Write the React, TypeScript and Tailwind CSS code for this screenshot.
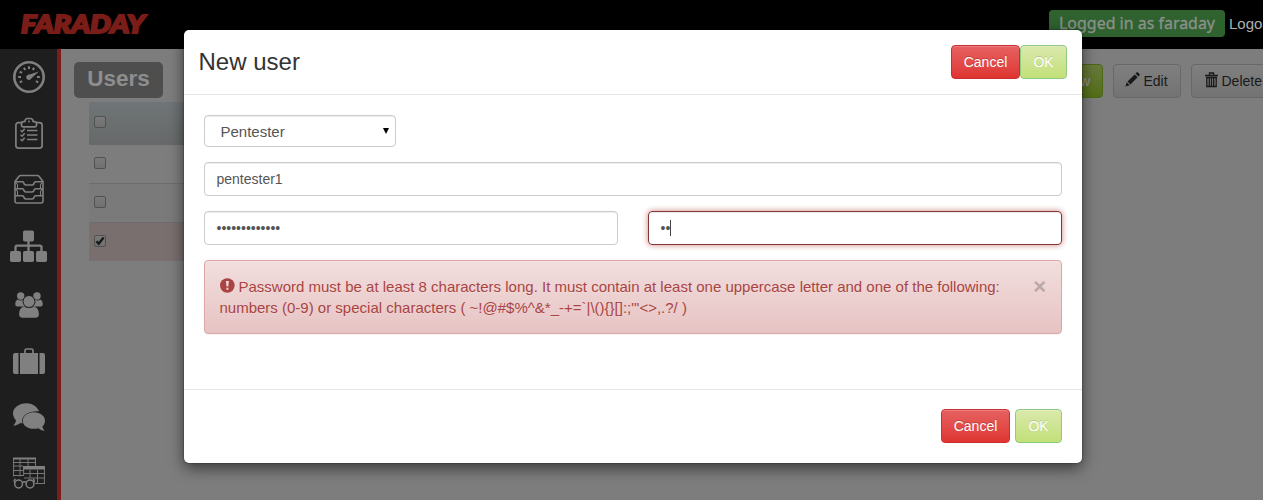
import React from "react";

const ARIAL = "font-['Liberation_Sans',Arial,sans-serif]";

function Gauge() {
  return (
    <svg width="57" height="56" viewBox="0 0 57 56" fill="none" stroke="#808080">
      <circle cx="29" cy="28" r="14.7" strokeWidth="2.6" />
      <path
        strokeWidth="2"
        d="M18.2 28h2.8M37 28h2.8M19.7 22.6l2.3 1.3M24 18.7l1.2 2.2M29 17.2v2.8M34 18.7l-1.2 2.2M19.8 33.3l2.3-1.2M38.2 33.3l-2.3-1.2"
      />
      <path d="M38.8 22.6l-8.2 7.5a2.4 2.4 0 1 1-2.7-4z" fill="#808080" stroke="none" />
      <circle cx="28.8" cy="28.2" r="2.5" fill="#808080" stroke="none" />
    </svg>
  );
}

function Clipboard() {
  return (
    <svg width="57" height="56" viewBox="0 0 57 56" fill="none" stroke="#808080" strokeLinejoin="round">
      <path strokeWidth="1.700" d="M22 17.700h-3.500a2.600 2.600 0 0 0-2.600 2.600v20.300a2.600 2.600 0 0 0 2.600 2.600h21a2.600 2.600 0 0 0 2.600-2.600v-20.300a2.600 2.600 0 0 0-2.600-2.600H36" />
      <path strokeWidth="1.700" d="M21.500 20.300v-1.800q0-1.800 2-1.800h1.300q.4-2.900 2.200-3.200h4q1.800.3 2.200 3.200h1.300q2 0 2 1.800v1.800q0 1.500-1.500 1.500H23q-1.500 0-1.500-1.500z" />
      <circle cx="29" cy="16.500" r="1" fill="#808080" stroke="none" />
      <path strokeWidth="1.500" d="M20.500 25.300l1.600 1.400 2.600-3M20.500 29.800l1.600 1.400 2.600-3M20.500 34.300l1.600 1.400 2.600-3" />
      <path strokeWidth="1.600" d="M27 25.500h10.500M27 30h10.500M27 34.500h10.500" />
    </svg>
  );
}

function Inbox() {
  return (
    <svg width="57" height="56" viewBox="0 0 57 56" fill="none" stroke="#808080" strokeWidth="1.600" strokeLinejoin="round">
      <path d="M15 20.500l4-5.300q.6-.7 1.600-.7h16.800q1 0 1.600.7l4 5.300v19.500a2 2 0 0 1-2 2H17a2 2 0 0 1-2-2z" />
      <path d="M15 20.700h7.500q1 0 1.300 1.300.4 2 2.200 2h6q1.800 0 2.200-2 .3-1.300 1.300-1.300H43M15 27.700h7.500q1 0 1.300 1.300.4 2 2.200 2h6q1.800 0 2.200-2 .3-1.300 1.300-1.300H43M15 34.700h7.500q1 0 1.300 1.300.4 2 2.200 2h6q1.800 0 2.200-2 .3-1.300 1.300-1.300H43" />
      <path strokeWidth="1.100" d="M15.500 21l2 2.500v4M42.500 21l-2 2.500v4M15.500 28l2 2.500v4M42.500 28l-2 2.500v4" />
    </svg>
  );
}

function Sitemap() {
  return (
    <svg width="57" height="58" viewBox="0 0 57 58" fill="#808080">
      <rect x="23" y="13.500" width="11" height="11" rx="1.800" />
      <rect x="10" y="34" width="11" height="11" rx="1.800" />
      <rect x="23" y="34" width="11" height="11" rx="1.800" />
      <rect x="36" y="34" width="11" height="11" rx="1.800" />
      <path fill="none" stroke="#808080" strokeWidth="2.300" d="M28.500 24v11M15.500 35v-4.700q0-1.600 1.600-1.600h22.800q1.600 0 1.600 1.600V35" />
    </svg>
  );
}

function Group() {
  return (
    <svg width="57" height="58" viewBox="0 0 57 58" fill="#808080">
      <circle cx="20.700" cy="21" r="3.700" />
      <circle cx="37" cy="21" r="3.700" />
      <path d="M17.500 24.500q3.500 2 5.300 0 .2 4.500 3 7H17q-1.800-.2-1.800-2.500 0-3.500 2.300-4.500zM40.500 24.500q-3.500 2-5.300 0-.2 4.500-3 7H41q1.800-.2 1.800-2.500 0-3.500-2.300-4.500z" />
      <circle cx="29" cy="26.500" r="6" stroke="#1e1e1e" />
      <path d="M24 31.500q5 3 10 0 4.900 1.300 4.900 7.500 0 3.800-3.500 3.800H22.600q-3.500 0-3.500-3.800 0-6.200 4.900-7.500z" />
    </svg>
  );
}

function Suitcase() {
  return (
    <svg width="57" height="56" viewBox="0 0 57 56" fill="#808080">
      <path d="M18.500 20v21H15q-2 0-2-2V22q0-2 2-2zM20 20h18v21H20zM39.500 20H43q2 0 2 2v17q0 2-2 2h-3.500z" />
      <path fill="none" stroke="#808080" strokeWidth="1.700" d="M25 20v-2.500q0-1.500 1.500-1.500h5q1.500 0 1.500 1.500V20" />
    </svg>
  );
}

function Comments() {
  return (
    <svg width="57" height="56" viewBox="0 0 57 56" fill="#808080">
      <path d="M26.500 14.300c-7.500 0-13.500 4.400-13.500 10 0 3 1.500 5.500 3 7.200-.4 2-1.300 3.700-2.800 5.300 3-.4 5.500-1.400 7-2.900l2.300.5c-2.300-7.200 5.500-12.700 16.500-12.100-2-4.800-6.700-8-12.500-8z" />
      <path d="M34 23.300c6.300 0 11 3.700 11 8.400 0 2.600-1.300 4.700-2.600 5.800.3 1.700 1 3 2.400 4.300-2.800-.3-4.700-1.200-6.300-2.600-8.300 2.300-15.700-1.600-15.700-7.500 0-4.700 4.900-8.400 11.200-8.400z" />
    </svg>
  );
}

function Tables() {
  return (
    <svg width="57" height="56" viewBox="0 0 57 56" fill="none" stroke="#808080" strokeWidth="0.900">
      <path fill="#808080" stroke="none" d="M13 12.500h23V14.500H13zM23 21h22v3.500H23z" />
      <path d="M13.600 14v17.500M20 14v17.500M28 14v7M35.500 14v7M13 17.500h23M13 21h10M13 25.500h10M13 30.500h10M23.600 23v8M30 25v8M37.500 25v13.500M44.400 23v15.500M24 28.500h21M24 33h21M35 38.500h10" />
      <g strokeWidth="1.500">
        <circle cx="18.600" cy="39" r="3.900" />
        <circle cx="30" cy="39" r="3.900" />
        <path d="M22.300 37.500q2-1.500 4 0M14.800 37.500q-1.300-2.500.7-3.700M33.700 37.500q1.300-2.500-.7-3.700" />
      </g>
    </svg>
  );
}

function Cancel() {
  return (
    <button className="h-[34px] w-[69px] rounded-[4px] border border-[#c9302f] bg-linear-to-b from-[#e66060] to-[#df3431] text-[14px] leading-5 text-white shadow-[inset_0_1px_0_rgba(255,255,255,0.2)] text-shadow-[0_-1px_0_rgba(0,0,0,0.2)]">
      Cancel
    </button>
  );
}

function Ok() {
  return (
    <button className="h-[34px] w-[47px] rounded-[4px] border border-[#8fca82] bg-linear-to-b from-[#dae9ac] to-[#c2e077] text-[14px] leading-5 text-white shadow-[inset_0_1px_0_rgba(255,255,255,0.2)] text-shadow-[0_-1px_0_rgba(0,0,0,0.15)]">
      OK
    </button>
  );
}

function Box({ checked = false }: { checked?: boolean }) {
  return (
    <span className="relative mb-[2px] ml-[5px] block h-3 w-3 rounded-[2px] border border-[#515151] bg-linear-to-b from-[#7a7a7a] to-[#707070]">
      {checked && (
        <svg className="absolute left-0 top-0" width="10" height="10" viewBox="0 0 10 10" fill="none" stroke="#181818" strokeWidth="2.400">
          <path d="M1.500 5.200l2.200 2.500L8.600 1.500" />
        </svg>
      )}
    </span>
  );
}

function Modal() {
  return (
    <section className="absolute left-[184px] top-[30px] flex h-[433px] w-[898px] flex-col rounded-[5px] bg-white shadow-[0_5px_15px_rgba(0,0,0,0.55),0_0_2px_rgba(0,0,0,0.6)]">
      <header className="flex h-[65px] items-start justify-between border-b border-[#e5e5e5] pl-[14.500px] pr-[15px] pt-[15px]">
        <h3 className="mt-px text-[24px] leading-[32px] text-[#333]">New user</h3>
        <div className="flex">
          <Cancel />
          <Ok />
        </div>
      </header>
      <div className="flex h-[294px] flex-col px-5 pt-5">
        <div className="flex h-8 w-[192px] items-center justify-between rounded-[4px] border border-[#ccc] pl-[15.500px] pr-[6px] text-[15px] text-[#555] shadow-[inset_0_1px_1px_rgba(0,0,0,0.075)]">
          <span className="mt-[2px]">Pentester</span>
          <svg width="6" height="6" viewBox="0 0 6 6">
            <path d="M0 0h6L3 6z" fill="#000" />
          </svg>
        </div>
        <div className="mt-[15px] flex h-[34px] items-center rounded-[4px] border border-[#ccc] pl-[11.500px] text-[14px] text-[#555] shadow-[inset_0_1px_1px_rgba(0,0,0,0.075)]">
          pentester1
        </div>
        <div className="mt-[15px] flex gap-[30px]">
          <div className="flex h-[34px] flex-1 items-center rounded-[4px] border border-[#ccc] pl-[11.500px] text-[14px] text-[#555] shadow-[inset_0_1px_1px_rgba(0,0,0,0.075)]">
            •••••••••••••
          </div>
          <div className="flex h-[34px] flex-1 items-center rounded-[4px] border border-[#843534] pl-[11.500px] text-[14px] text-[#555] shadow-[inset_0_1px_1px_rgba(0,0,0,0.075),0_0_6px_#ce8483]">
            ••<span className="h-4 w-px bg-[#444]" />
          </div>
        </div>
        <div className="mt-[15px] flex h-[74px] rounded-[4px] border border-[#dca7a7] bg-linear-to-b from-[#f2dede] to-[#e7c3c3] pl-[14.500px] pr-[15px] pt-[15px] text-[15px] leading-[21px] text-[#a94442] shadow-[inset_0_1px_0_rgba(255,255,255,0.25),0_1px_2px_rgba(0,0,0,0.05)] text-shadow-[0_1px_0_rgba(255,255,255,0.2)]">
          <p className="flex-1 whitespace-nowrap">
            <svg className="mr-[4px] mt-[-5px] inline-block align-middle" width="15" height="15" viewBox="0 0 15 15">
              <circle cx="7.300" cy="7.500" r="7.300" fill="#a94442" />
              <path d="M5.900 3h3l-.6 5.500H6.500zM6.400 9.700h2v2h-2z" fill="#f0dada" />
            </svg>
            Password must be at least 8 characters long. It must contain at least one uppercase letter and one of the following:
            <br />
            {"numbers (0-9) or special characters ( ~!@#$%^&*_-+=`|\\(){}[]:;\"'<>,.?/ )"}
          </p>
          <span className="text-[22px] font-bold leading-[22px] text-[#bba7a7]">×</span>
        </div>
      </div>
      <footer className="flex h-[74px] justify-end gap-[5px] border-t border-[#e5e5e5] pr-5 pt-[19px]">
        <Cancel />
        <Ok />
      </footer>
    </section>
  );
}

export default function App() {
  return (
    <div className={`relative flex h-[500px] w-[1263px] flex-col overflow-hidden bg-[#7d7d7d] ${ARIAL}`}>
      <header className="flex h-[49px] shrink-0 items-start justify-between bg-black">
        <svg className="ml-[18px] mt-[6px] overflow-visible" width="132" height="36" viewBox="0 0 132 36">
          <text
            x="3"
            y="27"
            textLength="124"
            lengthAdjust="spacingAndGlyphs"
            fill="#7a1d18"
            stroke="#7a1d18"
            strokeWidth="2"
            className="font-['Lato',sans-serif] text-[25px] font-black italic"
          >
            FARADAY
          </text>
        </svg>
        <div className="flex w-[214px] items-start gap-1 pt-[10px]">
          <svg className="shrink-0 rounded-[4px] bg-[#2f622f]" width="176" height="27" viewBox="0 0 176 27">
            <text x="10" y="19" textLength="156" lengthAdjust="spacingAndGlyphs" fill="#8c918c" stroke="#8c918c" strokeWidth="0.300" className="font-['Noto_Sans',sans-serif] text-[16.500px]">
              Logged in as faraday
            </text>
          </svg>
          <span className="mt-[3px] whitespace-nowrap text-[15px] leading-[22px] text-[#b0b0b0]">Logout</span>
        </div>
      </header>
      <div className="flex min-h-0 flex-1">
        <nav className="flex w-[61px] shrink-0 flex-col overflow-hidden border-r-4 border-[#7c1c1b] bg-[#1e1e1e] [&>svg]:shrink-0">
          <Gauge />
          <Clipboard />
          <Inbox />
          <Sitemap />
          <Group />
          <Suitcase />
          <Comments />
          <Tables />
        </nav>
        <main className="flex flex-1 justify-between overflow-hidden">
          <div className="flex flex-col pl-[13px] pt-[13px]">
            <h1 className="flex h-9 w-[89px] items-center justify-center rounded-[5px] bg-[#4e4e4e] pb-[2px] text-[22.500px] font-bold text-[#8e8e8e]">Users</h1>
            <div className="ml-[15px] mt-1 flex w-[200px] flex-col">
              <div className="flex h-[43px] items-center bg-linear-to-b from-[#6f7577] to-[#676969] pb-[2px]">
                <Box />
              </div>
              <div className="flex h-[39px] items-center border-b border-[#6d6d6d] bg-[#7d7d7d] pb-[1px]">
                <Box />
              </div>
              <div className="flex h-[39px] items-center border-b border-[#6d6d6d] bg-[#7a7a7a]">
                <Box />
              </div>
              <div className="flex h-[38px] items-center bg-[#796f6f]">
                <Box checked />
              </div>
            </div>
          </div>
          <div className="flex w-[213px] shrink-0 gap-[10px] pt-[15px] text-[14px] text-[#191919]">
            <div className="flex h-[34px] w-[53px] shrink-0 items-center justify-end rounded-[4px] border border-[#4b6818] bg-linear-to-b from-[#6a793b] to-[#526f15] pr-[12px] text-[#949494]">New</div>
            <div className="flex h-[34px] w-[68px] shrink-0 items-center rounded-[4px] border border-[#686868] bg-linear-to-b from-[#7f7f7f] to-[#737373] pl-[11px]">
              <svg className="mb-[3px] mr-[3.500px]" width="15" height="15" viewBox="0 0 15 15" fill="#191919">
                <path d="M0.500 14.500l1.200-4.200 3 3zM2.500 9.500L9.700 2.400l2.900 2.900-7.200 7.200zM10.500 1.600l1-1q.8-.8 1.600 0l1.300 1.300q.8.8 0 1.600l-1 1z" />
              </svg>
              Edit
            </div>
            <div className="flex h-[34px] w-[86px] shrink-0 items-center rounded-[4px] border border-[#686868] bg-linear-to-b from-[#7f7f7f] to-[#737373] pl-[13px]">
              <svg className="mb-[3px] mr-[3.500px]" width="13" height="16" viewBox="0 0 13 16" fill="none" stroke="#191919" strokeWidth="1.300">
                <path d="M0 3.500h13M4.500 3V1h4v2M1.800 6v8.500h9.400V6M1 5.500h11M4.300 6v8M6.500 6v8M8.700 6v8" />
              </svg>
              Delete
            </div>
          </div>
        </main>
      </div>
      <Modal />
    </div>
  );
}
